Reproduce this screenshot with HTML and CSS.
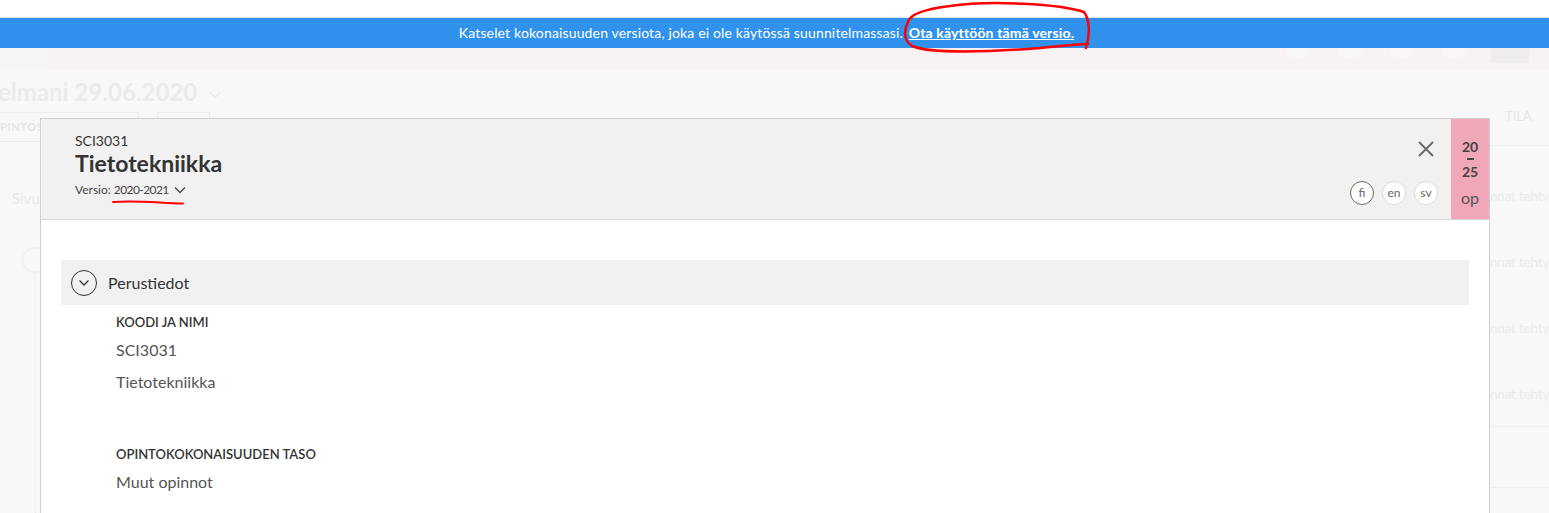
FILE: index.html
```html
<!DOCTYPE html>
<html lang="fi">
<head>
<meta charset="utf-8">
<title>Tietotekniikka – versio</title>
<link rel="stylesheet" href="styles.css">
</head>
<body>
<div class="topstrip"></div>
<div class="banner">
  <span class="banner-text">Katselet kokonaisuuden versiota, joka ei ole käytössä suunnitelmassasi.</span>
  <a class="banner-link" href="#">Ota käyttöön tämä versio.</a>
</div>
<div class="nav">
  <div class="nav-home"></div>
  <div class="nav-main">
    <span class="nav-dot"></span>
    <span class="nav-dot"></span>
    <span class="nav-dot"></span>
    <span class="nav-dot nav-dot-last"></span>
    <span class="nav-box"></span>
  </div>
</div>
<div class="page">
  <div class="page-title">elmani 29.06.2020
    <svg class="title-chevron" width="12" height="8" viewBox="0 0 12 8"><path d="M1 1.5 L6 6.5 L11 1.5" fill="none" stroke="#e9e9e9" stroke-width="1.3"/></svg>
  </div>
  <div class="page-bar">
    <div class="tabs">
      <span class="tab tab-wide">PINTOS</span>
      <span class="tab tab-narrow"></span>
    </div>
    <div class="col-head">TILA</div>
  </div>
  <div class="page-body">
    <div class="side-left">
      <div class="side-link">Sivu</div>
      <div class="side-circle"></div>
      <div class="side-line"></div>
    </div>
    <div class="page-fill"></div>
    <div class="side-right">
      <div class="status-row">nnat tehty</div>
      <div class="status-row">nnat tehty</div>
      <div class="status-row">nnat tehty</div>
      <div class="status-row status-row-short">nnat tehty</div>
      <div class="status-row status-row-empty"></div>
    </div>
  </div>
</div>

<div class="modal">
  <div class="modal-head">
    <div class="head-main">
      <div class="head-code">SCI3031</div>
      <h1 class="head-title">Tietotekniikka</h1>
      <div class="head-version">Versio: <span class="version-select"><span class="version-value">2020-2021</span>
        <svg class="version-chevron" width="12" height="8" viewBox="0 0 12 8"><path d="M1 1.5 L6 6.5 L11 1.5" fill="none" stroke="#444" stroke-width="1.3"/></svg></span>
      </div>
    </div>
    <div class="head-tools">
      <svg class="close-icon" width="16" height="16" viewBox="0 0 16 16"><path d="M1 1 L15 15 M15 1 L1 15" stroke="#6b6b6b" stroke-width="2" fill="none"/></svg>
      <div class="langs">
        <span class="lang lang-active">fi</span>
        <span class="lang">en</span>
        <span class="lang">sv</span>
      </div>
    </div>
    <div class="credits">
      <div class="credit-num">20</div>
      <div class="credit-dash"></div>
      <div class="credit-num">25</div>
      <div class="credit-unit">op</div>
    </div>
  </div>
  <div class="modal-body">
    <div class="section-bar">
      <span class="section-toggle">
        <svg width="12" height="8" viewBox="0 0 12 8"><path d="M1.5 1.5 L6 6 L10.5 1.5" fill="none" stroke="#333" stroke-width="1.3"/></svg>
      </span>
      <span class="section-title">Perustiedot</span>
    </div>
    <div class="field">
      <div class="field-label">KOODI JA NIMI</div>
      <div class="field-value">SCI3031</div>
      <div class="field-value">Tietotekniikka</div>
    </div>
    <div class="field field-second">
      <div class="field-label">OPINTOKOKONAISUUDEN TASO</div>
      <div class="field-value">Muut opinnot</div>
    </div>
  </div>
</div>

<svg class="annotations" width="1549" height="513" viewBox="0 0 1549 513">
  <path d="M1086 48 C1090 35 1090 20 1084 12 C1060 4 990 0 950 6 C925 9 910 14 908 22 C904 30 903 40 912 46 C930 54 990 52 1040 48 C1060 46 1080 44 1088 44" fill="none" stroke="#ff0000" stroke-width="2.5" stroke-linecap="round"/>
  <path d="M113 202 C135 200 160 203 183 203.5" fill="none" stroke="#ff0000" stroke-width="2" stroke-linecap="round"/>
</svg>
</body>
</html>
```

FILE: styles.css
```css
* { box-sizing: border-box; margin: 0; padding: 0; }
html, body { width: 1549px; height: 513px; overflow: hidden; }
body {
  font-family: "Lato", "Noto Sans", sans-serif;
  background: #f8f8f8;
  color: #333;
  position: relative;
}

.topstrip { height: 18px; background: #fff; border-bottom: 1px solid #dbe3ea; }

.banner {
  height: 30px;
  background: #3192ee;
  color: #fff;
  font-size: 14px;
  line-height: 30px;
  letter-spacing: 0.15px;
  text-align: center;
  padding-right: 16px;
  position: relative;
  z-index: 1;
}
.banner-link { color: #fff; font-weight: 700; text-decoration: underline; margin-left: 2px; }

.nav { height: 22px; display: flex; }
.nav-home { width: 48px; background: #f6f6f6; }
.nav-main { flex: 1; background: #f8f2f3; display: flex; justify-content: flex-end; align-items: flex-start; }
.nav-dot {
  width: 25px; height: 10px; margin-right: 27px;
  background: #f9f6f6; border-radius: 0 0 13px 13px;
}
.nav-dot-last { margin-right: 25px; }
.nav-box { width: 38px; height: 15px; background: #f0eded; margin-right: 20px; }

.page { color: #ebebeb; }
.page-title {
  padding-top: 7px; height: 37px;
  font-size: 24px; line-height: 30px; font-weight: 700;
  margin-left: -2px; display: flex; gap: 12px;
  align-items: flex-start;
}
.title-chevron { margin-top: 14px; }

.page-bar { display: flex; margin-top: 5px; height: 30px; }
.tabs { flex: 1; display: flex; }
.tab {
  height: 30px; border: 1px solid #ececec; border-left: 0;
  font-size: 11px; font-weight: 700; letter-spacing: 0.6px; color: #e4e4e4;
  padding-top: 7px; overflow: hidden; white-space: nowrap;
}
.tab-wide { width: 139px; }
.tab-narrow { width: 53px; margin-left: 18px; border-left: 1px solid #ececec; }
.col-head { width: 44px; font-size: 13px; line-height: 16px; margin-top: -4px; color: #e6e6e6; }

.page-body { display: flex; }
.side-left { width: 40px; overflow: hidden; flex-shrink: 0; }
.side-link { margin: 46px 0 0 12px; font-size: 15px; line-height: 20px; color: #e8e8e8; white-space: nowrap; }
.side-circle { margin: 39px 0 0 22px; width: 26px; height: 26px; border-radius: 50%; border: 1px solid #ececec; }
.side-line { margin-left: 35px; height: 300px; border-left: 1px dotted #ececec; }
.page-fill { flex: 1; }
.side-right {
  width: 59px; flex-shrink: 0; overflow: hidden;
  margin-top: 3px; border-top: 1px solid #efefef; padding-top: 40px;
}
.status-row { height: 66px; font-size: 13.5px; letter-spacing: -0.2px; line-height: 20px; color: #ebebeb; white-space: nowrap; }
.status-row-short { height: 43px; border-bottom: 1px solid #efefef; }
.status-row-empty { height: 61px; border-bottom: 1px solid #efefef; }

/* modal dialog */
.modal {
  position: absolute; left: 40px; top: 118px; width: 1450px; height: 420px;
  background: #fff; border: 1px solid #cfcfcf; z-index: 2;
  display: flex; flex-direction: column;
}
.modal-head { height: 101px; background: #f1f1f1; border-bottom: 1px solid #d6d6d6; display: flex; }
.head-main { flex: 1; padding: 13px 0 0 34px; color: #333; }
.head-code { font-size: 14px; line-height: 17px; }
.head-title { font-size: 23px; line-height: 29px; font-weight: 700; }
.head-version { font-size: 12px; line-height: 18px; color: #444; margin-top: 3px; }
.version-select { display: inline-flex; align-items: center; gap: 5px; }
.version-value { letter-spacing: -0.6px; }

.head-tools { display: flex; flex-direction: column; align-items: flex-end; padding-right: 13px; }
.close-icon { margin-top: 22px; margin-right: 4px; }
.langs { display: flex; gap: 8px; margin-top: 24px; }
.lang {
  width: 24px; height: 24px; border-radius: 50%; background: #fff;
  border: 1px solid #dcdcdc; color: #666; font-size: 12px; line-height: 21px; text-align: center;
}
.lang-active { border: 1.5px solid #666; }

.credits {
  width: 38px; background: #f0a7b8; display: flex; flex-direction: column; align-items: center;
  padding-top: 20px; color: #444;
}
.credit-num { font-size: 14px; line-height: 16px; font-weight: 700; }
.credit-dash { width: 7px; height: 2px; background: #444; margin: 3px 0 4px; }
.credit-unit { font-size: 16px; line-height: 20px; color: #555; margin-top: 8px; }

.modal-body { padding: 40px 20px 0; }
.section-bar { height: 45px; background: #f1f1f1; display: flex; align-items: center; padding-left: 10px; gap: 11px; }
.section-toggle {
  width: 26px; height: 26px; border-radius: 50%; border: 1.3px solid #333;
  display: flex; align-items: center; justify-content: center;
}
.section-toggle svg { margin-top: 1px; }
.section-title { font-size: 16px; color: #333; }

.field { padding-left: 55px; margin-top: 9px; }
.field-second { margin-top: 48px; }
.field-label { font-size: 13px; line-height: 16px; font-weight: 600; color: #333; margin-bottom: 4px; }
.field-value { font-size: 16px; line-height: 32px; color: #555; }

.annotations { position: absolute; left: 0; top: 0; z-index: 3; pointer-events: none; }
```
